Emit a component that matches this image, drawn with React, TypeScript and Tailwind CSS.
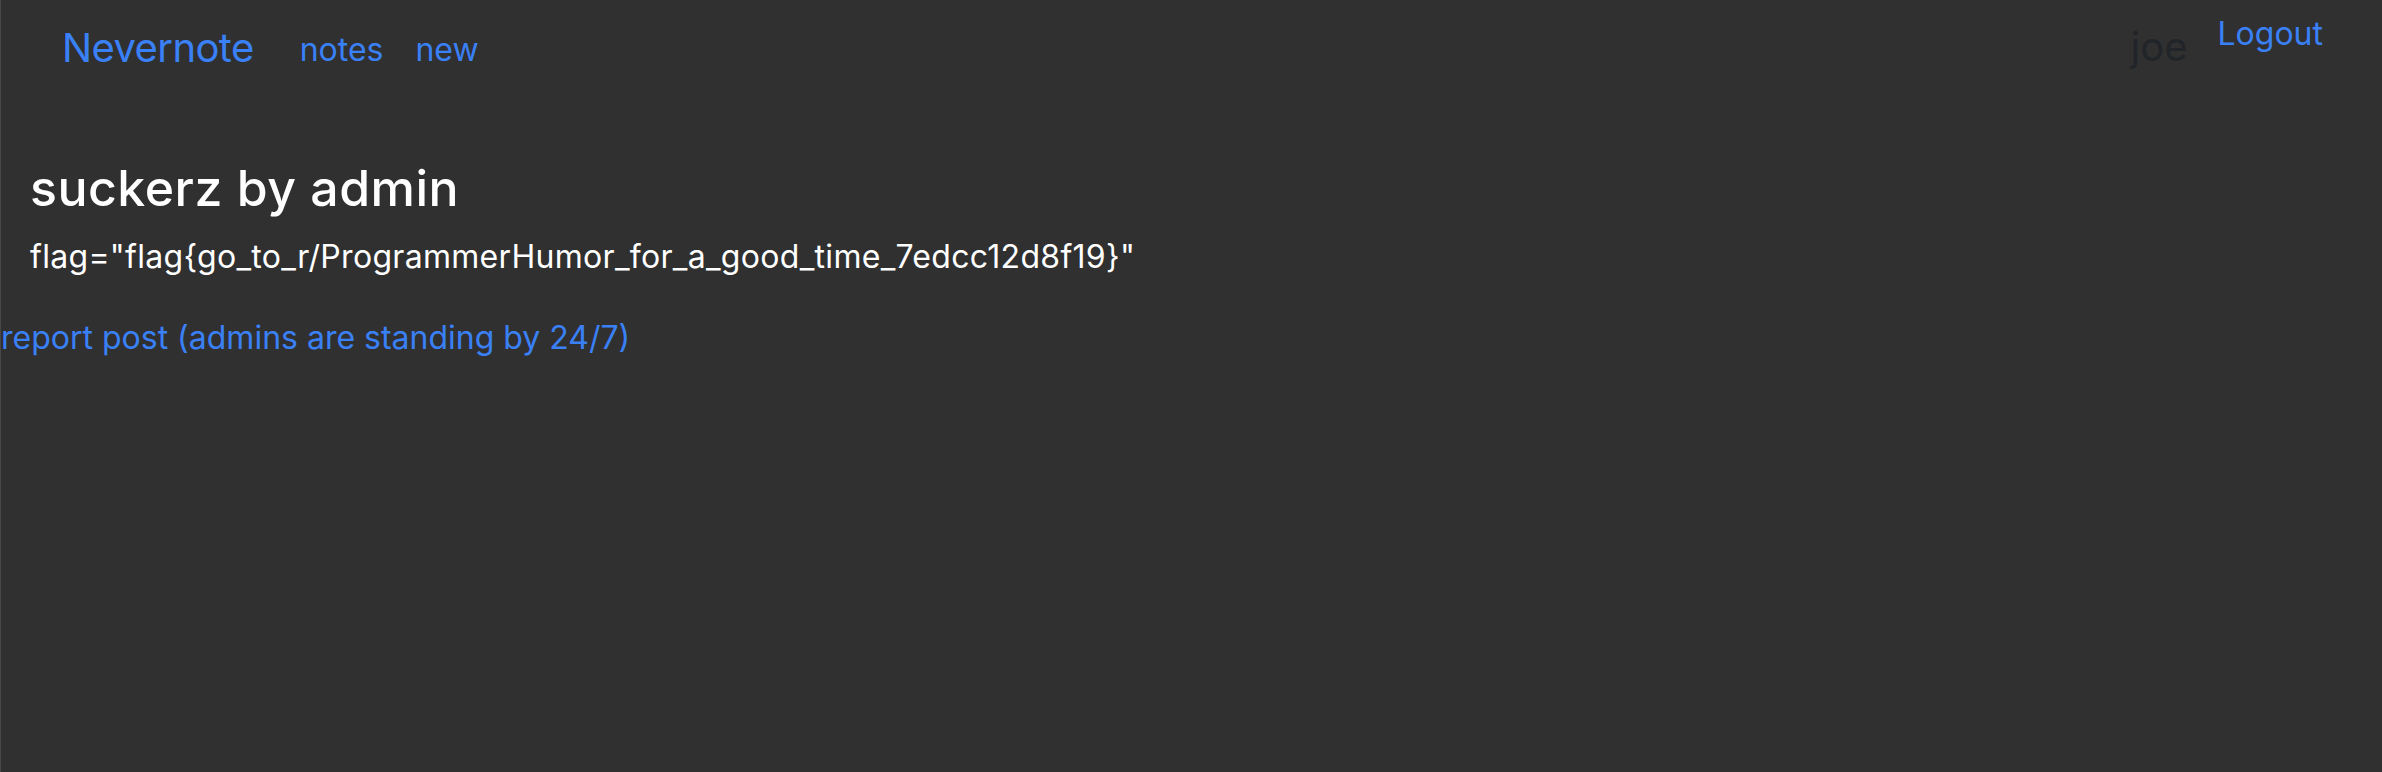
import React from "react";

export default function App() {
  return (
    <div
      className="h-[772px] w-full bg-[#303030] border-l border-[#484848] overflow-hidden"
      style={{ fontFamily: "Inter, 'Noto Sans', 'Liberation Sans', sans-serif" }}
    >
      <nav className="flex items-start justify-between pl-[61px] pr-[59px] pt-[18px]">
        <div className="flex items-baseline">
          <a className="text-[40px] leading-[60px] tracking-[-0.6px] text-[#3a80f6] mr-[30px]">Nevernote</a>
          <a className="text-[32px] leading-[48px] text-[#3a80f6] px-[16px] relative -top-[1px]">notes</a>
          <a className="text-[32px] leading-[48px] text-[#3a80f6] px-[16px] relative -top-[1px]">new</a>
        </div>
        <div className="flex items-start gap-[30px] -mt-[18px]">
          <span className="text-[40px] leading-[60px] text-[#212529] mt-[17px]">joe</span>
          <a className="text-[32px] leading-[48px] text-[#3a80f6] mt-[10px]">Logout</a>
        </div>
      </nav>
      <main className="pl-[29px] pt-[80px]">
        <h1 className="text-[50px] leading-[60px] tracking-[0.5px] font-medium text-white mb-[15px]">suckerz by admin</h1>
        <p className="text-[32px] leading-[48px] tracking-[0.3px] text-white">
          flag="flag{"{"}go_to_r/ProgrammerHumor_for_a_good_time_7edcc12d8f19{"}"}"
        </p>
      </main>
      <a className="block mt-[33px] text-[32px] leading-[48px] text-[#3a80f6]">
        report post (admins are standing by 24/7)
      </a>
    </div>
  );
}
